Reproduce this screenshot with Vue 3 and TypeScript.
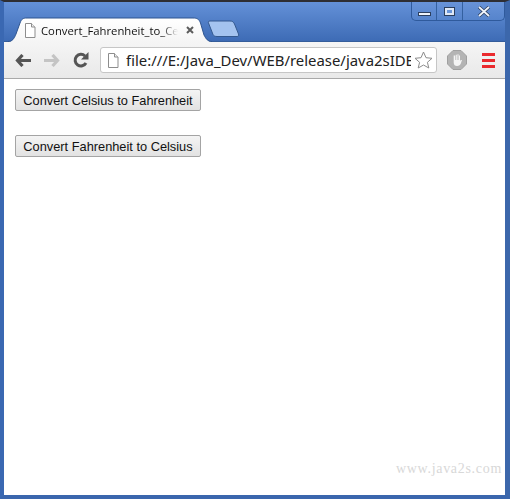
<script setup lang="ts">
const buttons = ['Convert Celsius to Fahrenheit', 'Convert Fahrenheit to Celsius']
const address = 'file:///E:/Java_Dev/WEB/release/java2sIDE'
</script>

<template>
  <div class="window">
    <div class="titlebar">
      <div class="tab-strip">
        <div class="tab">
          <svg class="tab-shape" width="204" height="25" viewBox="0 0 204 25">
            <defs>
              <linearGradient id="tabfill" x1="0" y1="0" x2="0" y2="1">
                <stop offset="0" stop-color="#ffffff" />
                <stop offset="1" stop-color="#f5f5f5" />
              </linearGradient>
            </defs>
            <path d="M0 25C4 25 6 22 8 17L12 6C13.500 2 15 1 19 1H185C189 1 191 2 192.500 6L196 18C198 22 200 25 204 25Z" fill="url(#tabfill)" />
            <path d="M0 24.500C4 24.500 6 22 8 17L12 6C13.500 2 15 1 19 1H185C189 1 191 2 192.500 6L196 18C198 22 200 24.500 204 24.500" fill="none" stroke="#2f5590" />
          </svg>
          <svg class="page-icon" width="12" height="15" viewBox="0 0 12 15">
            <path d="M1.500 .5H7.500L11 4V14.500H1.500Z" fill="#fff" stroke="#8d8d8d" />
            <path d="M7.500 .5V4H11" fill="#eee" stroke="#8d8d8d" />
          </svg>
          <span class="tab-title">Convert_Fahrenheit_to_Ce</span>
          <svg class="tab-close" width="8" height="8" viewBox="0 0 8 8">
            <path d="M1 1L7 7M7 1L1 7" stroke="#5c5c5c" stroke-width="2" />
          </svg>
        </div>
        <svg class="new-tab" width="34" height="17" viewBox="0 0 34 17">
          <path d="M3 1H23C25.500 1 26.500 2 27.500 4L31.500 14C32 15.500 31.500 16.500 30 16.500H10C7.500 16.500 6.500 15.500 6 14.500L1.500 3C1 2 1.500 1 3 1Z" fill="#a4c3ef" stroke="#34598f" />
        </svg>
      </div>
      <div class="controls">
        <div class="ctl ctl-min"><span class="min-glyph"></span></div>
        <div class="ctl ctl-max"><span class="max-glyph"></span></div>
        <div class="ctl ctl-close">
          <svg width="14" height="11" viewBox="0 0 14 11">
            <path d="M2 1L12 10M12 1L2 10" stroke="#2c3f5e" stroke-width="3.400" />
            <path d="M2 1L12 10M12 1L2 10" stroke="#eef3fb" stroke-width="1.800" />
          </svg>
        </div>
      </div>
    </div>

    <div class="toolbar">
      <svg class="nav" width="16" height="13" viewBox="0 0 16 13">
        <path d="M7.500 1L2.500 6.500L7.500 12M3 6.500H16" fill="none" stroke="#555" stroke-width="3.200" />
      </svg>
      <svg class="nav nav-fwd" width="16" height="13" viewBox="0 0 16 13">
        <path d="M8.500 1L13.500 6.500L8.500 12M13 6.500H0" fill="none" stroke="#c4c4c4" stroke-width="3.200" />
      </svg>
      <svg class="nav nav-reload" width="16" height="16" viewBox="0 0 16 16">
        <path d="M13 11A5.800 5.800 0 1 1 12 4" fill="none" stroke="#555" stroke-width="3" />
        <path d="M15.500 0V7.500H8Z" fill="#555" />
      </svg>
      <div class="omnibox">
        <svg class="page-icon" width="12" height="15" viewBox="0 0 12 15">
          <path d="M1.500 .5H7.500L11 4V14.500H1.500Z" fill="#fff" stroke="#8d8d8d" />
          <path d="M7.500 .5V4H11" fill="#eee" stroke="#8d8d8d" />
        </svg>
        <span class="address">{{ address }}</span>
        <svg class="star" width="19" height="18" viewBox="0 0 19 18">
          <path d="M9.500 1L12 6.700L18 7.300L13.400 11.300L14.800 17L9.500 14L4.200 17L5.600 11.300L1 7.300L7 6.700Z" fill="#fff" stroke="#8c8c8c" />
        </svg>
      </div>
      <svg class="adblock" width="20" height="20" viewBox="0 0 20 20">
        <path d="M6 .5H14L19.500 6V14L14 19.500H6L.5 14V6Z" fill="#b4b4b4" stroke="#a0a0a0" />
        <path d="M6.700 5.500V12.500C6.700 15 8 16 10 16C12 16 13.500 15 14 13L15 10H13.600L13 11.500V5.500H12V10H11.500V4.300H10.500V10H9.800V4.800H8.800V10H8.200V5.500Z" fill="#f5f5f5" />
      </svg>
      <div class="menu"><span></span><span></span><span></span></div>
    </div>

    <main class="page">
      <div v-for="label in buttons" :key="label" class="row">
        <button type="button">{{ label }}</button>
      </div>
      <span class="watermark">www.java2s.com</span>
    </main>
  </div>
</template>

<style scoped>
.window {
  width: 510px;
  height: 499px;
  box-sizing: border-box;
  display: flex;
  flex-direction: column;
  background: #3f6db5;
  border-top: 2px solid #2e2e33;
  border-left: 4px solid #3a68b2;
  border-right: 5px solid #3c67ab;
  border-bottom: 4px solid #3a66ad;
  overflow: hidden;
}

.titlebar {
  height: 40px;
  flex: none;
  display: flex;
  justify-content: space-between;
  align-items: flex-start;
  margin: 0 -5px 0 -4px;
  padding-left: 8px;
  background: linear-gradient(#6491d8, #3e6cb6 96%, #30568f);
}

.tab-strip {
  display: flex;
  align-items: flex-end;
  height: 40px;
}

.tab {
  position: relative;
  width: 199px;
  height: 24px;
  display: flex;
  align-items: center;
  padding: 0 13px 0 16px;
  box-sizing: border-box;
  font-family: "Open Sans", sans-serif;
  font-size: 11.300px;
  color: #111;
}

.tab-shape {
  position: absolute;
  left: 0;
  top: -1px;
}

.page-icon {
  position: relative;
  flex: none;
}

.tab-title {
  position: relative;
  flex: 1;
  margin-left: 5px;
  white-space: nowrap;
  overflow: hidden;
  -webkit-mask-image: linear-gradient(90deg, #000 88%, transparent);
  mask-image: linear-gradient(90deg, #000 88%, transparent);
}

.tab-close {
  position: relative;
  flex: none;
  margin-left: 8px;
}

.new-tab {
  margin: 0 0 5px 0;
}

.controls {
  display: flex;
  height: 18px;
  margin-right: 5px;
  border: 1px solid #2f5a9c;
  border-top: none;
  border-radius: 0 0 5px 5px;
  background: linear-gradient(#6893d8, #5684cc);
}

.ctl {
  height: 18px;
  display: flex;
  align-items: center;
  justify-content: center;
  box-sizing: border-box;
  border-right: 1px solid #34609f;
}

.ctl-min {
  width: 25px;
}

.ctl-max {
  width: 26px;
}

.ctl-close {
  width: 41px;
  border-right: none;
}

.min-glyph {
  width: 11px;
  height: 2px;
  margin-top: 6px;
  background: #eef3fb;
  border: 1px solid #2c3f5e;
}

.max-glyph {
  width: 5px;
  height: 3px;
  border: 2px solid #dfe8f6;
  outline: 1px solid #2c3f5e;
  background: #6a96da;
}

.toolbar {
  height: 36px;
  flex: none;
  display: flex;
  align-items: center;
  padding: 0 0 0 11px;
  background: linear-gradient(#f5f5f5, #e9e9e9);
  border-bottom: 1px solid #a9a9a9;
}

.nav {
  flex: none;
}

.nav-fwd {
  margin-left: 13px;
}

.nav-reload {
  margin-left: 13px;
}

.omnibox {
  width: 337px;
  height: 26px;
  flex: none;
  box-sizing: border-box;
  margin-left: 11px;
  display: flex;
  align-items: center;
  padding: 0 3px 0 6px;
  background: #fff;
  border: 1px solid #c6c6c6;
  border-radius: 3px;
  font-family: "Noto Sans", sans-serif;
  font-size: 14.900px;
  color: #222;
}

.address {
  flex: 1;
  min-width: 0;
  margin-left: 7px;
  white-space: nowrap;
  overflow: hidden;
}

.star {
  flex: none;
  margin-left: 3px;
}

.adblock {
  flex: none;
  margin-left: 10px;
}

.menu {
  flex: none;
  margin-left: 15px;
  width: 13px;
  display: flex;
  flex-direction: column;
  gap: 3px;
}

.menu span {
  height: 3px;
  background: #ea2a2e;
}

.page {
  position: relative;
  flex: 1;
  min-height: 0;
  background: #fff;
  padding: 10px 11px;
}

.row {
  height: 46px;
}

button {
  width: 186px;
  height: 22px;
  padding: 0;
  display: block;
  font-family: "Liberation Sans", Arial, sans-serif;
  font-size: 12.800px;
  color: #111;
  background: linear-gradient(#f4f4f4, #e2e2e2);
  border: 1px solid #a4a4a4;
  border-radius: 2px;
}

.watermark {
  position: absolute;
  right: 3px;
  bottom: 18px;
  font-family: "Liberation Serif", serif;
  font-size: 14px;
  letter-spacing: 0.700px;
  color: #d8d8d8;
}
</style>
